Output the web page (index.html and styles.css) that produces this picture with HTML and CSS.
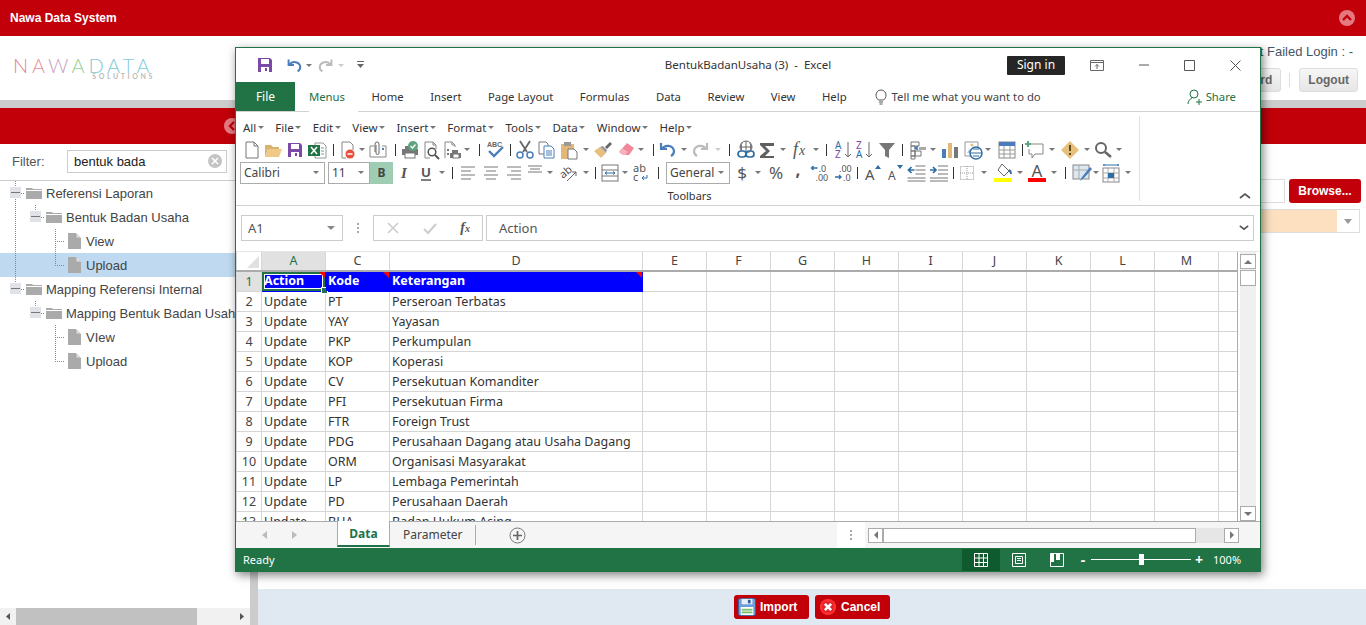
FILE: index.html
```html
<!DOCTYPE html>
<html lang="en">
<head>
    <meta charset="UTF-8">
    <title>Nawa Data System</title>
    <link rel="stylesheet" href="styles.css">
</head>
<body>
    <!-- Top bar -->
    <div class="topbar">
        <span class="app-title">Nawa Data System</span>
        <span class="round-btn"><svg width="12" height="12" viewBox="0 0 12 12"><path d="M2 8l4-4 4 4" fill="none" stroke="#c1000a" stroke-width="2.4"/></svg></span>
    </div>

    <!-- Header -->
    <div class="head">
        <div class="logo">
            <div class="logo-name"><span class="c1">N</span><span class="c2">A</span><span class="c3">W</span><span class="c4">A</span><span class="c5">D</span><span class="c5">A</span><span class="c6">T</span><span class="c6">A</span></div>
            <div class="logo-sub">SOLUTIONS</div>
        </div>
        <div class="head-right">
            <div class="user-line">User/Form : Host : Group Menu : Login sebagai : Last Login : 20 Mar 2020 12:00 | Last Failed Login : -</div>
            <div class="head-btns">
                <button class="head-btn">Change Password</button>
                <span class="head-sep"></span>
                <button class="head-btn">Logout</button>
            </div>
        </div>
    </div>
    <div class="band-gray"></div>
    <div class="band-red"><span class="round-btn side-toggle"><svg width="12" height="12" viewBox="0 0 12 12"><path d="M8 2L4 6l4 4" fill="none" stroke="#c1000a" stroke-width="2.4"/></svg></span></div>

    <div class="main">
        <!-- Menu tree -->
        <div class="side">
            <div class="filter">
                <label>Filter:</label>
                <div class="filter-box">
                    <span>bentuk bada</span>
                    <svg width="14" height="14" viewBox="0 0 14 14"><circle cx="7" cy="7" r="7" fill="#c4c4c4"/><path d="M4 4l6 6M10 4l-6 6" stroke="#fff" stroke-width="1.6"/></svg>
                </div>
            </div>
            <div class="tree">
                <div class="row"><i class="node vdown"><b class="minus"></b></i><svg class="folder" width="16" height="12" viewBox="0 0 16 12"><path d="M0 1h6l1 1h9v1H0zM0 4h16v8H0z" fill="#aaa"/></svg><span>Referensi Laporan</span></div>
                <div class="row"><i class="g vline"></i><i class="node vtop"><b class="minus"></b></i><svg class="folder" width="16" height="12" viewBox="0 0 16 12"><path d="M0 1h6l1 1h9v1H0zM0 4h16v8H0z" fill="#aaa"/></svg><span>Bentuk Badan Usaha</span></div>
                <div class="row"><i class="g vline"></i><i class="g"></i><i class="node vfull"></i><svg class="file" width="13" height="16" viewBox="0 0 13 16"><path d="M0 0h8l5 5v11H0z" fill="#aaa"/><path d="M8.5 0l4.5 4.5H8.5z" fill="#ddd"/></svg><span>View</span></div>
                <div class="row selected"><i class="g vline"></i><i class="g"></i><i class="node vtop"></i><svg class="file" width="13" height="16" viewBox="0 0 13 16"><path d="M0 0h8l5 5v11H0z" fill="#aaa"/><path d="M8.5 0l4.5 4.5H8.5z" fill="#ddd"/></svg><span>Upload</span></div>
                <div class="row"><i class="node vtop"><b class="minus"></b></i><svg class="folder" width="16" height="12" viewBox="0 0 16 12"><path d="M0 1h6l1 1h9v1H0zM0 4h16v8H0z" fill="#aaa"/></svg><span>Mapping Referensi Internal</span></div>
                <div class="row"><i class="g"></i><i class="node vtop"><b class="minus"></b></i><svg class="folder" width="16" height="12" viewBox="0 0 16 12"><path d="M0 1h6l1 1h9v1H0zM0 4h16v8H0z" fill="#aaa"/></svg><span>Mapping Bentuk Badan Usaha</span></div>
                <div class="row"><i class="g"></i><i class="g"></i><i class="node vfull"></i><svg class="file" width="13" height="16" viewBox="0 0 13 16"><path d="M0 0h8l5 5v11H0z" fill="#aaa"/><path d="M8.5 0l4.5 4.5H8.5z" fill="#ddd"/></svg><span>VIew</span></div>
                <div class="row"><i class="g"></i><i class="g"></i><i class="node vtop"></i><svg class="file" width="13" height="16" viewBox="0 0 13 16"><path d="M0 0h8l5 5v11H0z" fill="#aaa"/><path d="M8.5 0l4.5 4.5H8.5z" fill="#ddd"/></svg><span>Upload</span></div>
            </div>
            <div class="side-scroll">
                <svg width="16" height="17" viewBox="0 0 16 17"><path d="M10 5v7L6 8.500z" fill="#555"/></svg>
                <div class="side-track"><div class="side-thumb"></div></div>
                <svg width="16" height="17" viewBox="0 0 16 17"><path d="M6 5v7l4-3.500z" fill="#555"/></svg>
            </div>
        </div>
        <div class="splitter"></div>

        <!-- Upload form -->
        <div class="content">
            <div class="form">
                <div class="file-row">
                    <div class="file-input"></div>
                    <button class="browse">Browse...</button>
                </div>
                <div class="select-row"><div class="select-fill"></div><div class="select-arrow"></div></div>
            </div>
            <div class="actions">
                <button class="action">
                    <svg width="20" height="20" viewBox="0 0 20 20"><rect x=".5" y=".5" width="19" height="19" rx="2" fill="#6b9fdc" stroke="#2f5d9e"/><rect x="4" y="1" width="12" height="6" fill="#e8eef6"/><rect x="11" y="2" width="3" height="4" fill="#2f5d9e"/><rect x="3" y="10" width="14" height="9" fill="#fff"/><rect x="4" y="12" width="12" height="2" fill="#7bbf6a"/><rect x="4" y="15" width="12" height="2" fill="#7bbf6a"/></svg>
                    Import
                </button>
                <button class="action">
                    <svg width="20" height="20" viewBox="0 0 20 20"><circle cx="10" cy="10" r="9" fill="#f33"/><rect x="4" y="4" width="12" height="12" rx="3" fill="#e8202a"/><path d="M6.500 6.500l7 7M13.500 6.500l-7 7" stroke="#fff" stroke-width="3"/></svg>
                    Cancel
                </button>
            </div>
        </div>
    </div>

    <!-- Excel window lying over the page -->
    <div class="excel">
        <div class="xl-title">
            <div class="qat">
                <svg width="18" height="18" viewBox="0 0 18 18"><path d="M2 2h12l2 2v12H2z" fill="#7b4aa8"/><rect x="5" y="3" width="8" height="5" fill="#fff"/><rect x="5" y="11" width="8" height="5" fill="#fff"/><rect x="9" y="12" width="2" height="3" fill="#7b4aa8"/></svg>
                <svg class="q-undo" width="18" height="18" viewBox="0 0 20 20"><path d="M4 4v6h6M5 10c3-5 11-4 12 2 0 2-1 4-3 5" fill="none" stroke="#4a7ebb" stroke-width="2.200"/></svg>
                <i class="caret w12"></i>
                <svg class="q-redo" width="18" height="18" viewBox="0 0 20 20"><path d="M16 4v6h-6M15 10c-3-5-11-4-12 2 0 2 1 4 3 5" fill="none" stroke="#bbb" stroke-width="2.200"/></svg>
                <i class="caret w12 light"></i>
                <svg class="q-more" width="9" height="10" viewBox="0 0 9 10"><path d="M1 1h7v1H1zM1 4h7L4.500 8z" fill="#666"/></svg>
            </div>
            <div class="doc-name">BentukBadanUsaha (3)&nbsp; -&nbsp; Excel</div>
            <div class="sign-in">Sign in</div>
            <div class="win-btns">
                <svg width="14" height="11" viewBox="0 0 14 11"><path d="M.5.500h13v10H.5zM.5 2.500h13M7 9V4.500M5 6.500l2-2 2 2" fill="none" stroke="#666"/></svg>
                <svg width="10" height="2" viewBox="0 0 10 2"><path d="M0 1h10" stroke="#555"/></svg>
                <svg width="11" height="11" viewBox="0 0 11 11"><path d="M.5.500h10v10H.5z" fill="none" stroke="#555"/></svg>
                <svg width="11" height="11" viewBox="0 0 11 11"><path d="M.5.500l10 10M10.500.500l-10 10" stroke="#555"/></svg>
            </div>
        </div>

        <div class="xl-tabs">
            <div class="tab-file">File</div>
            <div class="tab active">Menus</div>
            <div class="tab home">Home</div>
            <div class="tab">Insert</div>
            <div class="tab">Page Layout</div>
            <div class="tab">Formulas</div>
            <div class="tab">Data</div>
            <div class="tab">Review</div>
            <div class="tab">View</div>
            <div class="tab">Help</div>
            <div class="tell">
                <svg width="14" height="16" viewBox="0 0 14 16"><path d="M4.500 11C3 9.500 2 8.500 2 6a5 5 0 0 1 10 0c0 2.500-1 3.500-2.500 5zM5 13h4M5.500 15h3" fill="none" stroke="#555"/></svg>
                <span>Tell me what you want to do</span>
            </div>
            <div class="share">
                <svg width="16" height="16" viewBox="0 0 16 16"><circle cx="7" cy="5" r="4" fill="none" stroke="#217346"/><path d="M1 15c0-3 2-5 4-6M12 10v6M9 13h6" fill="none" stroke="#217346"/></svg>
                <span>Share</span>
            </div>
        </div>

        <div class="ribbon">
            <div class="ribbon-group">
                <div class="menus">
                    <span>All<i class="caret w9"></i></span><span>File<i class="caret w9"></i></span><span>Edit<i class="caret w9"></i></span><span>View<i class="caret w9"></i></span><span>Insert<i class="caret w9"></i></span><span>Format<i class="caret w9"></i></span><span>Tools<i class="caret w9"></i></span><span>Data<i class="caret w9"></i></span><span>Window<i class="caret w9"></i></span><span>Help<i class="caret w9"></i></span>
                </div>

                <div class="tools">
                    <svg width="22" height="20" viewBox="-1 0 20 20"><path d="M4 2h8l4 4v12H4zM12 2v4h4" fill="#fff" stroke="#777"/></svg>
                    <svg width="22" height="20" viewBox="0 0 20 20"><path d="M2 5h6l2 2h6v2H5L2 17z" fill="#d9b26f"/><path d="M5 9h14l-3 8H2z" fill="#efc985"/></svg>
                    <svg width="22" height="20" viewBox="0 0 20 20"><path d="M3 3h12l2 2v12H3z" fill="#7b4aa8"/><rect x="6" y="4" width="8" height="5" fill="#fff"/><rect x="6" y="12" width="8" height="5" fill="#fff"/><rect x="10" y="13" width="2" height="3" fill="#7b4aa8"/></svg>
                    <svg width="22" height="20" viewBox="0 0 20 20"><path d="M8 3h8l3 3v12H8z" fill="#fff" stroke="#999"/><rect x="1" y="5" width="12" height="11" fill="#217346"/><path d="M4 7l6 7M10 7l-6 7" stroke="#fff" stroke-width="1.500"/><path d="M14 8h3M14 11h3M14 14h3" stroke="#6a9"/></svg>
                    <i class="sep w10"></i>
                    <svg width="20" height="20" viewBox="0 0 20 20"><path d="M4 2h8l3 3v5M4 2v16h4" fill="none" stroke="#888"/><circle cx="12" cy="14" r="4.500" fill="#e8503a"/><path d="M9.500 14h5" stroke="#fff" stroke-width="1.500"/></svg>
                    <i class="caret w8"></i>
                    <svg width="24" height="20" viewBox="0 0 20 20"><path d="M2 6v11h16V6h-4M6 6H2" fill="none" stroke="#888"/><path d="M7 12V4a2 2 0 0 1 4 0v9a1.500 1.500 0 0 1-3 0V5" fill="none" stroke="#666"/><rect x="14" y="8" width="2" height="2" fill="#4a7ebb"/></svg>
                    <i class="sep w10"></i>
                    <svg width="20" height="20" viewBox="0 0 20 20"><path d="M5 6h10v3H5z" fill="#777"/><path d="M2 9h16v6h-3v-2H5v2H2z" fill="#777"/><rect x="5" y="13" width="10" height="5" fill="#fff" stroke="#777"/><circle cx="13" cy="6" r="5" fill="#5da57e"/><path d="M10.500 6l2 2 3-3.500" fill="none" stroke="#fff" stroke-width="1.300"/></svg>
                    <svg width="22" height="20" viewBox="0 0 20 20"><path d="M9 18H4V2h8l3 3v4M12 2v3h3" fill="none" stroke="#888"/><circle cx="11" cy="12" r="3.800" fill="none" stroke="#555" stroke-width="1.500"/><path d="M14 15l4 4" stroke="#555" stroke-width="2"/></svg>
                    <svg width="20" height="20" viewBox="0 0 20 20"><path d="M3 18V2h7l3 3v2M10 2v3h3" fill="none" stroke="#888"/><path d="M5 9h2v2H5zM5 13h2v2H5z" fill="#777"/><path d="M10 10h6v3h3v5H8v-5h2z" fill="#777"/><rect x="11" y="14" width="6" height="4" fill="#fff" stroke="#777"/></svg>
                    <i class="caret w10"></i>
                    <i class="sep w14"></i>
                    <svg width="20" height="20" viewBox="0 0 20 20"><text x="1" y="7" class="ic-text">ABC</text><path d="M3 11l5 5 9-9" fill="none" stroke="#4a7ebb" stroke-width="2.400"/></svg>
                    <i class="sep w8"></i>
                    <svg width="22" height="20" viewBox="0 0 20 20"><path d="M5 1l7 11M15 1L8 12" stroke="#666" stroke-width="1.800"/><circle cx="5" cy="15" r="3" fill="#fff" stroke="#4a7ebb" stroke-width="1.500"/><circle cx="15" cy="15" r="3" fill="#fff" stroke="#4a7ebb" stroke-width="1.500"/></svg>
                    <svg width="20" height="20" viewBox="0 0 20 20"><path d="M3 2h7l2 2v10H3z" fill="#fff" stroke="#777"/><path d="M8 6h7l3 3v9H8z" fill="#fff" stroke="#4a7ebb"/><path d="M10 11h6M10 13h6M10 15h6" stroke="#4a7ebb"/></svg>
                    <svg width="26" height="20" viewBox="0 0 20 20"><rect x="2" y="4" width="13" height="15" fill="#e3b877"/><rect x="5" y="2" width="7" height="4" fill="#999"/><path d="M9 9h6l3 3v7H9z" fill="#fff" stroke="#777"/></svg>
                    <i class="caret w8"></i>
                    <svg width="26" height="20" viewBox="0 0 20 20"><path d="M12 7l5-5 2 2-5 5z" fill="#666"/><path d="M7 7l6 6-5 5-7-7z" fill="#e8c07d"/><path d="M7 7l3-1 4 4-1 3z" fill="#999"/></svg>
                    <svg width="20" height="20" viewBox="0 0 20 20"><path d="M11 3l7 5-5 7H7l-4-3z" fill="#f0889a"/><path d="M7 15l-4-3 3-4 6 4-3 3z" fill="#f6b1bc"/></svg>
                    <i class="caret w10"></i>
                    <i class="sep w14"></i>
                    <svg width="20" height="20" viewBox="0 0 20 20"><path d="M1 3v6h6M2 9c3-5 11-4 12 2 0 2-1 4-3 5" fill="none" stroke="#4a7ebb" stroke-width="2.200"/></svg>
                    <i class="caret w8"></i>
                    <svg width="26" height="20" viewBox="0 0 20 20"><path d="M16 3v6h-6M15 9c-3-5-11-4-12 2 0 2 1 4 3 5" fill="none" stroke="#bbb" stroke-width="2.200"/></svg>
                    <i class="caret w8 light"></i>
                    <i class="sep w14"></i>
                    <svg width="20" height="20" viewBox="0 0 20 20"><circle cx="10" cy="7" r="6" fill="none" stroke="#666"/><path d="M4 7h12M10 1v12M6 2.500c-1 3-1 6 0 9M14 2.500c1 3 1 6 0 9" fill="none" stroke="#666"/><rect x="2" y="11" width="8" height="6" rx="3" fill="#fff" stroke="#2f6ea5" stroke-width="1.700"/><rect x="10" y="11" width="8" height="6" rx="3" fill="none" stroke="#2f6ea5" stroke-width="1.700"/></svg>
                    <svg width="22" height="20" viewBox="0 0 20 20"><path d="M3 3h14v3H8l5 5-5 5h9v2H3v-2l6-5-6-6z" fill="#5f5f5f"/></svg>
                    <i class="caret w10"></i>
                    <svg width="24" height="20" viewBox="0 0 20 20"><text x="3" y="15" class="ic-fx">f</text><text x="9" y="15" class="ic-fx small">x</text></svg>
                    <i class="caret w8"></i>
                    <i class="sep w13"></i>
                    <svg width="20" height="20" viewBox="0 0 20 20"><text x="2" y="9" class="ic-az blue">A</text><text x="2" y="18" class="ic-az purple">Z</text><path d="M15 2v15M12 14l3 3 3-3" fill="none" stroke="#666"/></svg>
                    <svg width="22" height="20" viewBox="0 0 20 20"><text x="2" y="9" class="ic-az purple">Z</text><text x="2" y="18" class="ic-az blue">A</text><path d="M15 2v15M12 14l3 3 3-3" fill="none" stroke="#666"/></svg>
                    <svg width="24" height="20" viewBox="0 0 20 20"><path d="M2 3h16l-6 7v8l-4-2v-6z" fill="#777"/></svg>
                    <i class="sep w6"></i>
                    <svg width="24" height="20" viewBox="0 0 20 20"><path d="M4 2h8v4H4zM4 6h4v5H4zM4 11h4v5H4zM8 11h6v5H8zM4 16h4v3H4z" fill="#fff" stroke="#777"/><path d="M8 8h3M11 6L8 8l3 2" fill="none" stroke="#4a7ebb" stroke-width="1.500"/><rect x="12" y="7" width="7" height="3" fill="#aaa"/></svg>
                    <i class="caret w8"></i>
                    <svg width="26" height="20" viewBox="0 0 20 20"><rect x="2" y="9" width="4" height="9" fill="#4a7ebb"/><rect x="8" y="3" width="4" height="15" fill="#e3b877"/><rect x="14" y="7" width="4" height="11" fill="#777"/></svg>
                    <svg width="20" height="20" viewBox="0 0 20 20"><path d="M2 2h13v6M2 2v14h6" fill="#fff" stroke="#999"/><circle cx="9" cy="5" r="1.500" fill="#e8c07d"/><path d="M4 13l3-4 2 3" fill="#8fb4dc"/><circle cx="13" cy="13" r="6" fill="#fff" stroke="#2f6ea5" stroke-width="1.500"/><path d="M7 13h12M10 9h6M10 16h6" stroke="#2f6ea5"/></svg>
                    <i class="caret w10"></i>
                    <svg width="28" height="20" viewBox="0 0 20 20"><rect x="2" y="2" width="16" height="16" fill="#fff" stroke="#888"/><rect x="2" y="2" width="16" height="4" fill="#4a7ebb"/><path d="M2 10h16M2 14h16M7 6v12M13 6v12" stroke="#999"/></svg>
                    <i class="sep w2"></i>
                    <svg width="24" height="20" viewBox="0 0 20 20"><path d="M6 4h12v10h-8l-3 4v-4H4V9" fill="#fff" stroke="#888"/><path d="M3 1v6M0 4h6" stroke="#5da57e" stroke-width="2"/></svg>
                    <i class="caret w10"></i>
                    <svg width="26" height="20" viewBox="0 0 20 20"><path d="M10 1l9 9-9 9-9-9z" fill="#e8c07d"/><path d="M10 5v6M10 13v2" stroke="#5a4a20" stroke-width="2"/></svg>
                    <i class="caret w8"></i>
                    <svg width="24" height="20" viewBox="0 0 20 20"><circle cx="8" cy="8" r="5" fill="none" stroke="#666" stroke-width="2"/><path d="M12 12l6 5" stroke="#666" stroke-width="2.600"/></svg>
                    <i class="caret w8"></i>
                </div>

                <div class="tools">
                    <div class="combo font"><span>Calibri</span><i class="caret"></i></div>
                    <div class="combo size"><span>11</span><i class="caret"></i></div>
                    <div class="bold-btn">B</div>
                    <svg width="22" height="20" viewBox="0 0 20 20"><text x="10" y="15" class="ic-i">I</text></svg>
                    <svg width="22" height="20" viewBox="0 0 20 20"><text x="10" y="14" class="ic-u">U</text><path d="M5 17h10" stroke="#555" stroke-width="1.500"/></svg>
                    <i class="caret w10"></i>
                    <i class="sep w11"></i>
                    <svg width="20" height="20" viewBox="0 0 20 20"><path d="M3 4h14M3 8h10M3 12h14M3 16h10" stroke="#777"/></svg>
                    <svg width="26" height="20" viewBox="0 0 20 20"><path d="M3 4h14M5 8h10M3 12h14M5 16h10" stroke="#777"/></svg>
                    <svg width="20" height="20" viewBox="0 0 20 20"><path d="M3 4h14M7 8h10M3 12h14M7 16h10" stroke="#777"/></svg>
                    <svg width="22" height="20" viewBox="0 0 20 20"><path d="M3 3h14M5 6h10M3 9h14" stroke="#777"/></svg>
                    <i class="caret w8"></i>
                    <svg width="28" height="20" viewBox="0 0 20 20"><text x="2" y="12" transform="rotate(-40 9 10)" class="ic-az gray">ab</text><path d="M9 18l9-9M14 9h4v4" fill="none" stroke="#666"/></svg>
                    <i class="caret w8"></i>
                    <i class="sep w10"></i>
                    <svg width="20" height="20" viewBox="0 0 20 20"><rect x="2" y="2" width="16" height="16" fill="none" stroke="#777"/><path d="M2 7h16M2 13h16" stroke="#777"/><path d="M5 10h10M5 10l2-1.500M5 10l2 1.500M15 10l-2-1.500M15 10l-2 1.500" fill="none" stroke="#2f6ea5"/></svg>
                    <i class="caret w10"></i>
                    <svg width="20" height="20" viewBox="0 0 20 20"><text x="3" y="9" class="ic-az gray">ab</text><text x="3" y="18" class="ic-az gray">c</text><path d="M17 12v3h-5M14 13l-2 2 2 2" fill="none" stroke="#2f6ea5"/></svg>
                    <i class="sep w16"></i>
                    <div class="combo general"><span>General</span><i class="caret"></i></div>
                    <svg width="24" height="20" viewBox="0 0 20 20"><text x="10" y="16" class="ic-big">$</text></svg>
                    <i class="caret w8"></i>
                    <svg width="28" height="20" viewBox="0 0 20 20"><text x="10" y="16" class="ic-big">%</text></svg>
                    <svg width="16" height="20" viewBox="2 0 16 20"><text x="10" y="13" class="ic-big bold">,</text></svg>
                    <svg width="27" height="20" viewBox="0 0 20 20"><text x="9" y="9" class="ic-num">.0</text><text x="6" y="18" class="ic-num">.00</text><path d="M8 5H2M4 3L2 5l2 2" fill="none" stroke="#2f6ea5" stroke-width="1.300"/></svg>
                    <svg width="20" height="20" viewBox="0 0 20 20"><text x="6" y="9" class="ic-num">.00</text><text x="10" y="18" class="ic-num">.0</text><path d="M2 14h6M6 12l2 2-2 2" fill="none" stroke="#2f6ea5" stroke-width="1.300"/></svg>
                    <i class="sep w8"></i>
                    <svg width="22" height="20" viewBox="0 0 20 20"><text x="3" y="17" class="ic-a big">A</text><path d="M13 6l3-4 3 4z" fill="#2f6ea5"/></svg>
                    <svg width="22" height="20" viewBox="0 0 20 20"><text x="4" y="17" class="ic-a">A</text><path d="M13 2l3 4 3-4z" fill="#2f6ea5"/></svg>
                    <svg width="23" height="20" viewBox="0 0 20 20"><path d="M9 3h10M9 7h10M9 11h10M1 15h18M1 18h18" stroke="#777"/><path d="M8 7H2M5 4L2 7l3 3" fill="none" stroke="#2f6ea5" stroke-width="1.700"/></svg>
                    <svg width="22" height="20" viewBox="0 0 20 20"><path d="M9 3h10M9 7h10M9 11h10M1 15h18M1 18h18" stroke="#777"/><path d="M1 7h6M4 4l3 3-3 3" fill="none" stroke="#2f6ea5" stroke-width="1.700"/></svg>
                    <i class="sep w7"></i>
                    <svg width="20" height="20" viewBox="0 0 20 20"><rect x="3.500" y="3.500" width="13" height="13" fill="none" stroke="#999" stroke-dasharray="1 1"/><path d="M10 3v14M3 10h14" stroke="#999" stroke-dasharray="1 1"/></svg>
                    <i class="caret w13"></i>
                    <svg width="26" height="20" viewBox="0 0 20 20"><path d="M9 1l7 7-5 5-6-6z" fill="#fff" stroke="#666"/><path d="M16 7c2 1 2 3 2 4" fill="none" stroke="#2f6ea5" stroke-width="2"/><rect x="1" y="15" width="18" height="4" fill="#ff0"/></svg>
                    <i class="caret w8"></i>
                    <svg width="26" height="20" viewBox="0 0 20 20"><text x="10" y="14" class="ic-a mid">A</text><rect x="1" y="15" width="18" height="4" fill="#f00"/></svg>
                    <i class="caret w8"></i>
                    <i class="sep w14"></i>
                    <svg width="20" height="20" viewBox="0 0 20 20"><rect x="1" y="2" width="16" height="14" fill="#dde7f2" stroke="#888"/><path d="M1 7h16M7 2v14" stroke="#aaa"/><path d="M18 4l-8 10-2 4 4-3 8-9z" fill="#4a7ebb"/></svg>
                    <i class="caret w8"></i>
                    <svg width="22" height="20" viewBox="0 0 20 20"><path d="M2 2h16M3 1v2M17 1v2" stroke="#2f6ea5"/><rect x="2" y="5" width="16" height="14" fill="#fff" stroke="#888"/><path d="M2 10h16M2 15h16M7 5v14M13 5v14" stroke="#aaa"/><rect x="7" y="10" width="6" height="5" fill="#2f6ea5"/></svg>
                    <i class="caret w12"></i>
                </div>
                <div class="group-name">Toolbars</div>
            </div>
            <div class="ribbon-rest">
                <svg width="12" height="8" viewBox="0 0 12 8"><path d="M1 6l5-4 5 4" fill="none" stroke="#555" stroke-width="1.700"/></svg>
            </div>
        </div>

        <div class="formula">
            <div class="name-box"><span>A1</span><i class="caret"></i></div>
            <div class="dots"></div>
            <div class="fx-box">
                <svg width="14" height="14" viewBox="0 0 14 14"><path d="M2 2l10 10M12 2L2 12" stroke="#ccc" stroke-width="1.600"/></svg>
                <svg width="14" height="14" viewBox="0 0 14 14"><path d="M1 8l4 4 8-9" fill="none" stroke="#ccc" stroke-width="2"/></svg>
                <span class="fx">f<small>x</small></span>
            </div>
            <div class="formula-input">
                <span>Action</span>
                <svg width="10" height="7" viewBox="0 0 12 8"><path d="M1 2l5 4 5-4" fill="none" stroke="#555" stroke-width="2"/></svg>
            </div>
        </div>

        <div class="sheet-wrap">
            <div class="sheet">
                <table>
                    <colgroup><col class="c-row"><col class="c-64"><col class="c-64"><col class="c-d"><col class="c-64"><col class="c-64"><col class="c-64"><col class="c-64"><col class="c-64"><col class="c-64"><col class="c-64"><col class="c-64"><col class="c-64"><col class="c-end"></colgroup>
                    <tr class="col-heads"><th class="corner"></th><th class="on">A</th><th>C</th><th>D</th><th>E</th><th>F</th><th>G</th><th>H</th><th>I</th><th>J</th><th>K</th><th>L</th><th>M</th><th></th></tr>
                    <tr><th class="on">1</th><td class="head-cell active"><span class="mark"></span>Action</td><td class="head-cell"><span class="mark"></span>Kode</td><td class="head-cell"><span class="mark"></span>Keterangan</td><td></td><td></td><td></td><td></td><td></td><td></td><td></td><td></td><td></td><td></td></tr>
                    <tr><th>2</th><td>Update</td><td>PT</td><td>Perseroan Terbatas</td><td></td><td></td><td></td><td></td><td></td><td></td><td></td><td></td><td></td><td></td></tr>
                    <tr><th>3</th><td>Update</td><td>YAY</td><td>Yayasan</td><td></td><td></td><td></td><td></td><td></td><td></td><td></td><td></td><td></td><td></td></tr>
                    <tr><th>4</th><td>Update</td><td>PKP</td><td>Perkumpulan</td><td></td><td></td><td></td><td></td><td></td><td></td><td></td><td></td><td></td><td></td></tr>
                    <tr><th>5</th><td>Update</td><td>KOP</td><td>Koperasi</td><td></td><td></td><td></td><td></td><td></td><td></td><td></td><td></td><td></td><td></td></tr>
                    <tr><th>6</th><td>Update</td><td>CV</td><td>Persekutuan Komanditer</td><td></td><td></td><td></td><td></td><td></td><td></td><td></td><td></td><td></td><td></td></tr>
                    <tr><th>7</th><td>Update</td><td>PFI</td><td>Persekutuan Firma</td><td></td><td></td><td></td><td></td><td></td><td></td><td></td><td></td><td></td><td></td></tr>
                    <tr><th>8</th><td>Update</td><td>FTR</td><td>Foreign Trust</td><td></td><td></td><td></td><td></td><td></td><td></td><td></td><td></td><td></td><td></td></tr>
                    <tr><th>9</th><td>Update</td><td>PDG</td><td>Perusahaan Dagang atau Usaha Dagang</td><td></td><td></td><td></td><td></td><td></td><td></td><td></td><td></td><td></td><td></td></tr>
                    <tr><th>10</th><td>Update</td><td>ORM</td><td>Organisasi Masyarakat</td><td></td><td></td><td></td><td></td><td></td><td></td><td></td><td></td><td></td><td></td></tr>
                    <tr><th>11</th><td>Update</td><td>LP</td><td>Lembaga Pemerintah</td><td></td><td></td><td></td><td></td><td></td><td></td><td></td><td></td><td></td><td></td></tr>
                    <tr><th>12</th><td>Update</td><td>PD</td><td>Perusahaan Daerah</td><td></td><td></td><td></td><td></td><td></td><td></td><td></td><td></td><td></td><td></td></tr>
                    <tr><th>13</th><td>Update</td><td>BHA</td><td>Badan Hukum Asing</td><td></td><td></td><td></td><td></td><td></td><td></td><td></td><td></td><td></td><td></td></tr>
                </table>
            </div>
            <div class="v-scroll">
                <div class="v-btn up"></div>
                <div class="v-thumb"></div>
                <div class="v-track"></div>
                <div class="v-btn down"></div>
            </div>
        </div>

        <div class="sheet-tabs">
            <div class="nav-arrows">
                <svg width="6" height="8" viewBox="0 0 6 8"><path d="M5 0v8L0 4z" fill="#bbb"/></svg>
                <svg width="6" height="8" viewBox="0 0 6 8"><path d="M1 0v8l5-4z" fill="#bbb"/></svg>
            </div>
            <div class="s-tab current">Data</div>
            <div class="s-tab">Parameter</div>
            <svg class="add-sheet" width="17" height="17" viewBox="0 0 17 17"><circle cx="8.500" cy="8.500" r="7.500" fill="none" stroke="#777"/><path d="M8.500 4v9M4 8.500h9" stroke="#666" stroke-width="1.700"/></svg>
            <div class="tab-dots"></div>
            <div class="h-scroll">
                <div class="h-btn left"></div>
                <div class="h-thumb"></div>
                <div class="h-track"></div>
                <div class="h-btn right"></div>
            </div>
        </div>

        <div class="status">
            <span class="ready">Ready</span>
            <div class="views">
                <div class="view on"><svg width="14" height="14" viewBox="0 0 14 14"><path d="M.5.500h13v13H.5zM.5 5h13M.5 9.500h13M5 .5v13M9.500.5v13" fill="none" stroke="#fff"/></svg></div>
                <div class="view"><svg width="14" height="14" viewBox="0 0 14 14"><path d="M.5.500h13v13H.5zM3.500 3.500h7v7h-7zM5 5.500h4M5 7.500h4" fill="none" stroke="#fff"/></svg></div>
                <div class="view"><svg width="14" height="14" viewBox="0 0 14 14"><path d="M.5.500h13v13H.5z" fill="none" stroke="#fff"/><path d="M1 1h3v8H1zM6 1h4v6H6z" fill="#fff"/></svg></div>
            </div>
            <div class="zoom">
                <span class="z-btn">-</span>
                <div class="z-slider"><i></i></div>
                <span class="z-btn">+</span>
            </div>
            <span class="z-val">100%</span>
        </div>
    </div>
</body>
</html>
```

FILE: styles.css
```css
/* General styling */
html, body {
    margin: 0;
    padding: 0;
    height: 625px;
    overflow: hidden;
    font-family: "Liberation Sans", Arial, sans-serif;
    background: #fff;
}

button {
    font-family: inherit;
    cursor: pointer;
}

.topbar {
    height: 36px;
    background: #c1000a;
    display: flex;
    align-items: center;
    justify-content: space-between;
    padding: 0 11px 0 10px;
}

.app-title {
    color: #fff;
    font-weight: bold;
    font-size: 12px;
}

.round-btn {
    width: 16px;
    height: 16px;
    border-radius: 50%;
    background: #e4797f;
    display: flex;
    align-items: center;
    justify-content: center;
}

.head {
    height: 64px;
    display: flex;
    justify-content: space-between;
    padding-left: 13px;
    box-sizing: border-box;
}

.logo {
    margin-top: 21px;
    width: 142px;
    font-family: Lato, "Liberation Sans", sans-serif;
}

.logo-name {
    font-size: 20px;
    font-weight: 300;
    letter-spacing: 3.800px;
    line-height: 16px;
    white-space: nowrap;
}

.c1 { color: #e67f95; }
.c2 { color: #e995a0; }
.c3 { color: #c9a3c4; }
.c4 { color: #98d395; }
.c5 { color: #7fcbd2; }
.c6 { color: #85cbe0; }

.logo-sub {
    font-size: 7px;
    font-weight: bold;
    color: #bbb;
    letter-spacing: 2.600px;
    text-align: right;
    line-height: 7px;
}

.head-right {
    display: flex;
    flex-direction: column;
    align-items: flex-end;
    padding-right: 8px;
}

.user-line {
    font-size: 13px;
    color: #456;
    margin-top: 8px;
    line-height: 15px;
    padding-right: 5px;
    white-space: nowrap;
}

.head-btns {
    display: flex;
    align-items: center;
    margin-top: 9px;
}

.head-btn {
    height: 24px;
    padding: 0 8px;
    font-size: 12px;
    font-weight: bold;
    color: #666;
    border: 1px solid #ddd;
    border-radius: 3px;
    background: linear-gradient(#f6f6f6, #e6e6e6);
}

.head-sep {
    width: 1px;
    height: 14px;
    background: #ddd;
    margin: 0 9px 0 8px;
}

.band-gray {
    height: 8px;
    background: #ccc;
}

.band-red {
    height: 36px;
    background: #c1000a;
    display: flex;
    align-items: center;
}

.side-toggle {
    margin-left: 224px;
}

.main {
    height: 481px;
    display: flex;
}

/* Left tree */
.side {
    width: 250px;
    display: flex;
    flex-direction: column;
}

.filter {
    height: 37px;
    box-sizing: border-box;
    border-bottom: 1px solid #ccc;
    display: flex;
    align-items: center;
    padding-left: 12px;
    font-size: 13px;
    color: #555;
}

.filter label {
    width: 55px;
    margin-top: -2px;
}

.filter-box {
    width: 160px;
    height: 23px;
    margin-top: -2px;
    box-sizing: border-box;
    border: 1px solid #ccc;
    display: flex;
    align-items: center;
    justify-content: space-between;
    padding: 0 4px 0 6px;
    font-size: 13px;
    color: #222;
}

.tree {
    flex: 1;
    overflow: hidden;
}

.row {
    height: 24px;
    display: flex;
    align-items: center;
    font-size: 13px;
    color: #444;
    white-space: nowrap;
}

.row.selected {
    background: #bfdaf0;
}

.g {
    width: 20px;
    height: 24px;
    flex: none;
}

.vline {
    background: linear-gradient(#888 50%, transparent 50%) 15px 0 / 1px 2px repeat-y;
}

.node {
    width: 26px;
    height: 24px;
    flex: none;
    position: relative;
}

.node::before {
    content: "";
    position: absolute;
    left: 15px;
    width: 1px;
    background: linear-gradient(#888 50%, transparent 50%) 0 0 / 1px 2px repeat-y;
}

.node::after {
    content: "";
    position: absolute;
    left: 15px;
    top: 12px;
    width: 10px;
    height: 1px;
    background: linear-gradient(to right, #888 50%, transparent 50%) 0 0 / 2px 1px repeat-x;
}

.vdown::before { top: 0; height: 24px; }
.vtop::before { top: 0; height: 12px; }
.vfull::before { top: 0; height: 24px; }

.minus {
    position: absolute;
    z-index: 1;
    left: 10px;
    top: 6px;
    width: 11px;
    height: 11px;
    background: #dfe3e8;
}

.minus::after {
    content: "";
    position: absolute;
    left: 1px;
    top: 5px;
    width: 9px;
    height: 1px;
    background: #777;
}

.folder {
    margin-right: 4px;
    flex: none;
}

.file {
    margin: 0 5px 0 2px;
    flex: none;
}

.side-scroll {
    height: 17px;
    display: flex;
    background: #f1f1f1;
}

.side-track {
    flex: 1;
}

.side-thumb {
    width: 181px;
    height: 17px;
    background: #c1c1c1;
}

.splitter {
    width: 8px;
    background: #ccc;
}

/* Right form */
.content {
    flex: 1;
    display: flex;
    flex-direction: column;
}

.form {
    flex: 1;
    padding: 35px 5px 0 300px;
}

.file-row {
    display: flex;
    gap: 4px;
    height: 24px;
}

.file-input {
    flex: 1;
    border: 1px solid #ddd;
}

.browse {
    width: 72px;
    height: 24px;
    border: none;
    border-radius: 3px;
    background: #c1000a;
    color: #fff;
    font-size: 12px;
    font-weight: bold;
}

.select-row {
    display: flex;
    height: 24px;
    margin-top: 6px;
    margin-right: 1px;
    box-sizing: border-box;
    border: 1px solid #ddd;
}

.select-fill {
    flex: 1;
    background: #fde0c0;
}

.select-arrow {
    width: 22px;
    position: relative;
}

.select-arrow::after {
    content: "";
    position: absolute;
    left: 7px;
    top: 9px;
    border-left: 4px solid transparent;
    border-right: 4px solid transparent;
    border-top: 5px solid #999;
}

.actions {
    height: 36px;
    background: #e0e9f2;
    display: flex;
    justify-content: center;
    align-items: center;
    gap: 6px;
}

.action {
    height: 24px;
    width: 75px;
    padding: 0 0 0 4px;
    border: none;
    border-radius: 3px;
    background: #c1000a;
    color: #fff;
    font-size: 12px;
    font-weight: bold;
    display: flex;
    align-items: center;
    gap: 4px;
}

.action svg {
    width: 18px;
    height: 18px;
}

/* Excel window */
.excel {
    position: absolute;
    left: 235px;
    top: 47px;
    width: 1026px;
    height: 525px;
    box-sizing: border-box;
    border: 1px solid #217346;
    background: #fff;
    box-shadow: 2px 3px 9px rgba(0, 0, 0, 0.5);
    display: flex;
    flex-direction: column;
    font-family: "Noto Sans", sans-serif;
    font-size: 12px;
    color: #444;
}

.caret {
    display: inline-flex;
    align-items: center;
    justify-content: center;
    height: 20px;
    flex: none;
    font-style: normal;
}

.caret::after {
    content: "";
    border-left: 3px solid transparent;
    border-right: 3px solid transparent;
    border-top: 3px solid #777;
}

.caret.light::after {
    border-top-color: #ccc;
}

.sep {
    display: inline-flex;
    justify-content: center;
    align-items: center;
    height: 20px;
    flex: none;
}

.sep::after {
    content: "";
    width: 1px;
    height: 12px;
    background: #333;
}

.w2 { width: 2px; }
.w6 { width: 6px; }
.w7 { width: 7px; }
.w8 { width: 8px; }
.w9 { width: 9px; }
.w10 { width: 10px; }
.w11 { width: 11px; }
.w12 { width: 12px; }
.w13 { width: 13px; }
.w14 { width: 14px; }
.w16 { width: 16px; }

.xl-title {
    height: 34px;
    flex: none;
    display: flex;
    align-items: center;
}

.qat {
    display: flex;
    align-items: center;
    width: 414px;
    padding-left: 20px;
    box-sizing: border-box;
}

.q-undo { margin-left: 11px; }
.q-redo { margin-left: 2px; }
.q-more { margin-left: 9px; }

.doc-name {
    width: 196px;
    text-align: center;
    font-size: 11.5px;
    color: #333;
    margin-top: -2px;
    white-space: nowrap;
}

.sign-in {
    margin-left: 161px;
    width: 58px;
    height: 19px;
    line-height: 18px;
    text-align: center;
    background: #262626;
    color: #fff;
    border-radius: 1px;
}

.win-btns {
    display: flex;
    align-items: center;
    margin-left: 25px;
    gap: 35px;
}

.xl-tabs {
    height: 30px;
    flex: none;
    display: flex;
    align-items: center;
    box-sizing: border-box;
    border-bottom: 1px solid #d2d2d2;
    font-size: 11.3px;
}

.tab-file {
    width: 59px;
    height: 29px;
    align-self: flex-start;
    line-height: 29px;
    text-align: center;
    background: #217346;
    color: #fff;
    font-size: 12px;
}

.tab {
    margin-left: 26.500px;
    white-space: nowrap;
    color: #333;
}

.tab.active {
    margin-left: 14px;
    color: #217346;
    padding-right: 13px;
    margin-right: -13px;
    height: 30px;
    line-height: 30px;
    background: #fff;
    align-self: flex-start;
    position: relative;
}

.tell {
    display: flex;
    align-items: center;
    gap: 4px;
    margin-left: 27px;
    color: #444;
}

.share {
    display: flex;
    align-items: center;
    gap: 3px;
    margin-left: auto;
    margin-right: 24px;
    color: #217346;
}

.ribbon {
    height: 94px;
    flex: none;
    display: flex;
    box-sizing: border-box;
    border-bottom: 1px solid #d2d2d2;
}

.ribbon-group {
    width: 904px;
    margin-top: 4px;
    border-right: 1px solid #e2e2e2;
    margin-bottom: 4px;
    padding-left: 4px;
    box-sizing: border-box;
}

.ribbon-rest {
    flex: 1;
    display: flex;
    justify-content: flex-end;
    align-items: flex-end;
    padding: 0 9px 5px 0;
}

.menus {
    display: flex;
    height: 22px;
    align-items: center;
    padding-left: 3px;
    gap: 10px;
    font-size: 11.500px;
    color: #333;
}

.menus span {
    display: flex;
    align-items: center;
    white-space: nowrap;
}

.tools {
    display: flex;
    align-items: center;
    height: 23px;
    flex-wrap: nowrap;
}

.tools svg {
    flex: none;
    overflow: visible;
}

.combo {
    height: 22px;
    box-sizing: border-box;
    border: 1px solid #ababab;
    display: flex;
    align-items: center;
    justify-content: space-between;
    padding: 0 3px 0 3px;
    flex: none;
    font-size: 12px;
    color: #444;
}

.combo .caret {
    width: 10px;
}

.font { width: 85px; margin-right: 3px; }
.size { width: 42px; }
.general { width: 64px; }

.bold-btn {
    width: 23px;
    height: 22px;
    line-height: 22px;
    flex: none;
    text-align: center;
    background: #9fcdb3;
    font-weight: bold;
    color: #444;
}

.ic-text {
    font-family: "Liberation Sans", sans-serif;
    font-size: 7px;
    font-weight: bold;
    fill: #666;
}

.ic-fx {
    font-family: "Liberation Serif", serif;
    font-style: italic;
    font-size: 18px;
    fill: #555;
}

.ic-fx.small { font-size: 14px; }

.ic-az {
    font-family: "Noto Sans", sans-serif;
    font-size: 10px;
    fill: #555;
}

.ic-az.blue { fill: #2f6ea5; }
.ic-az.purple { fill: #7b4aa8; }
.ic-az.gray { fill: #555; font-size: 11px; }

.ic-i {
    font-family: "Liberation Serif", serif;
    font-style: italic;
    font-weight: bold;
    font-size: 15px;
    fill: #555;
    text-anchor: middle;
}

.ic-u {
    font-family: "Liberation Sans", sans-serif;
    font-weight: bold;
    font-size: 13px;
    fill: #555;
    text-anchor: middle;
}

.ic-big {
    font-family: "Noto Sans", sans-serif;
    font-size: 17px;
    fill: #555;
    text-anchor: middle;
}

.ic-big.bold { font-weight: bold; }

.ic-num {
    font-family: "Noto Sans", sans-serif;
    font-size: 9px;
    fill: #555;
}

.ic-a {
    font-family: "Noto Sans", sans-serif;
    font-size: 12px;
    fill: #555;
}

.ic-a.big { font-size: 15px; }

.ic-a.mid {
    font-size: 17px;
    text-anchor: middle;
}

.group-name {
    text-align: center;
    font-size: 11px;
    color: #333;
    line-height: 14px;
    margin-top: 5px;
}

.formula {
    height: 45px;
    flex: none;
    display: flex;
    align-items: center;
    padding: 0 6px 2px 5px;
    box-sizing: border-box;
    background: #fff;
    font-size: 13px;
    color: #555;
}

.name-box {
    width: 102px;
    height: 26px;
    box-sizing: border-box;
    border: 1px solid #ccc;
    display: flex;
    align-items: center;
    justify-content: space-between;
    padding: 0 5px 0 6px;
}

.name-box .caret {
    width: 12px;
}

.name-box .caret::after {
    border-left-width: 4px;
    border-right-width: 4px;
    border-top-width: 4px;
    border-top-color: #888;
}

.dots {
    width: 2px;
    height: 10px;
    margin: 0 14px;
    background: linear-gradient(#aaa 50%, transparent 50%) 0 0 / 2px 4px;
}

.fx-box {
    width: 110px;
    height: 26px;
    box-sizing: border-box;
    border: 1px solid #ccc;
    display: flex;
    align-items: center;
    justify-content: space-between;
    padding: 0 12px 0 12px;
    margin-right: 3px;
}

.fx {
    font-family: "Liberation Serif", serif;
    font-style: italic;
    font-weight: bold;
    font-size: 14px;
    color: #555;
}

.fx small {
    font-size: 10px;
}

.formula-input {
    flex: 1;
    height: 26px;
    box-sizing: border-box;
    border: 1px solid #ccc;
    display: flex;
    align-items: center;
    justify-content: space-between;
    padding: 0 4px 0 12px;
}

.sheet-wrap {
    flex: 1;
    display: flex;
    min-height: 0;
    border-top: 1px solid #e6e6e6;
}

.sheet {
    width: 1002px;
    flex: none;
    overflow: hidden;
    box-sizing: border-box;
    border-right: 1px solid #ababab;
}

.sheet table {
    table-layout: fixed;
    border-collapse: collapse;
    width: 1001px;
    font-size: 12.500px;
    color: #333;
}

.c-row { width: 25px; }
.c-64 { width: 64px; }
.c-d { width: 253px; }
.c-end { width: 20px; }

.sheet tr {
    height: 20px;
}

.sheet th {
    font-weight: normal;
    padding: 0;
    font-size: 12.500px;
    border: 1px solid #d6d6d6;
    border-top: none;
    background: #fff;
    color: #444;
}

.sheet .col-heads {
    height: 19px;
}

.col-heads th {
    border-top: none;
    border-bottom: 2px solid #ababab;
    line-height: 16px;
}

.sheet th.on {
    background: #e1e1e1;
    color: #217346;
}

.corner {
    position: relative;
}

.corner::after {
    content: "";
    position: absolute;
    right: 2px;
    bottom: 2px;
    border-left: 12px solid transparent;
    border-bottom: 12px solid #e0e0e0;
}

.sheet td {
    padding: 1px 2px 0;
    border: 1px solid #d6d6d6;
    white-space: nowrap;
    overflow: hidden;
    line-height: 18px;
}

.sheet td.head-cell {
    padding-top: 0;
    background: #00f;
    color: #fff;
    font-weight: bold;
    border-color: #00f;
    position: relative;
}

.mark {
    position: absolute;
    right: 0;
    top: 0;
    border-left: 6px solid transparent;
    border-top: 6px solid #f00;
}

.sheet td.active {
    overflow: visible;
    box-shadow: inset 0 0 0 2px #217346, inset 0 0 0 3px #fff;
}

.sheet td.active::after {
    content: "";
    position: absolute;
    right: -3px;
    bottom: -3px;
    width: 5px;
    height: 5px;
    background: #217346;
    border: 1px solid #fff;
}

.v-scroll {
    width: 16px;
    margin-left: 2px;
    background: #f0f0f0;
    display: flex;
    flex-direction: column;
    padding-top: 2px;
}

.v-btn {
    height: 15px;
    box-sizing: border-box;
    border: 1px solid #ababab;
    background: #fff;
    flex: none;
    display: flex;
    align-items: center;
    justify-content: center;
}

.v-btn::after {
    content: "";
    border-left: 4px solid transparent;
    border-right: 4px solid transparent;
}

.v-btn.up::after { border-bottom: 4px solid #777; }
.v-btn.down::after { border-top: 4px solid #777; }

.v-thumb {
    height: 16px;
    flex: none;
    margin-top: 1px;
    box-sizing: border-box;
    border: 1px solid #ababab;
    background: #fff;
}

.v-track {
    flex: 1;
}

.sheet-tabs {
    height: 27px;
    flex: none;
    box-sizing: border-box;
    border-top: 1px solid #ababab;
    background: #f5f5f5;
    display: flex;
    align-items: center;
}

.nav-arrows {
    width: 101px;
    display: flex;
    gap: 23px;
    padding-left: 26px;
    box-sizing: border-box;
}

.s-tab {
    box-sizing: border-box;
    padding: 0 13px;
    width: 86px;
    color: #444;
    border-right: 1px solid #ababab;
    white-space: nowrap;
    height: 20px;
    line-height: 20px;
    align-self: center;
}

.s-tab.current {
    width: 53px;
    height: 26px;
    line-height: 26px;
    align-self: flex-start;
    background: #fff;
    color: #217346;
    font-weight: bold;
    text-align: center;
    padding: 0;
    border-left: 1px solid #ababab;
    border-right: 1px solid #ababab;
    border-bottom: 2px solid #217346;
    margin-top: -1px;
}

.add-sheet {
    margin-left: 33px;
    flex: none;
}

.tab-dots {
    width: 28px;
    height: 26px;
    margin-left: 311px;
    background: #fff;
    display: flex;
    align-items: center;
    justify-content: center;
    flex: none;
}

.tab-dots::after {
    content: "";
    width: 2px;
    height: 10px;
    background: linear-gradient(#aaa 50%, transparent 50%) 0 0 / 2px 4px;
}

.h-scroll {
    display: flex;
    align-items: center;
    margin-left: 3px;
    width: 372px;
    height: 15px;
}

.h-btn {
    width: 15px;
    height: 15px;
    box-sizing: border-box;
    border: 1px solid #ababab;
    background: #fff;
    flex: none;
    display: flex;
    align-items: center;
    justify-content: center;
}

.h-btn::after {
    content: "";
    border-top: 4px solid transparent;
    border-bottom: 4px solid transparent;
}

.h-btn.left::after { border-right: 4px solid #777; }
.h-btn.right::after { border-left: 4px solid #777; }

.h-thumb {
    width: 313px;
    height: 15px;
    box-sizing: border-box;
    border: 1px solid #ababab;
    background: #fff;
}

.h-track {
    width: 28px;
    height: 15px;
    background: #e6e6e6;
}

.status {
    height: 23px;
    flex: none;
    background: #217346;
    color: #fff;
    display: flex;
    align-items: center;
    font-size: 11px;
}

.ready {
    margin-left: 7px;
}

.views {
    display: flex;
    margin-left: auto;
    height: 22px;
}

.view {
    width: 38px;
    display: flex;
    align-items: center;
    justify-content: center;
}

.view.on {
    background: #0f5a2e;
}

.zoom {
    display: flex;
    align-items: center;
    margin-left: 2px;
    gap: 1px;
}

.z-btn {
    width: 10px;
    text-align: center;
    font-size: 14px;
    font-weight: bold;
    line-height: 14px;
}

.z-slider {
    width: 100px;
    height: 1px;
    background: #fff;
    position: relative;
    margin: 0 2px;
}

.z-slider i {
    position: absolute;
    left: 48px;
    top: -5px;
    width: 5px;
    height: 11px;
    background: #fff;
}

.z-val {
    width: 27px;
    margin-left: 9px;
    margin-right: 20px;
}
```
